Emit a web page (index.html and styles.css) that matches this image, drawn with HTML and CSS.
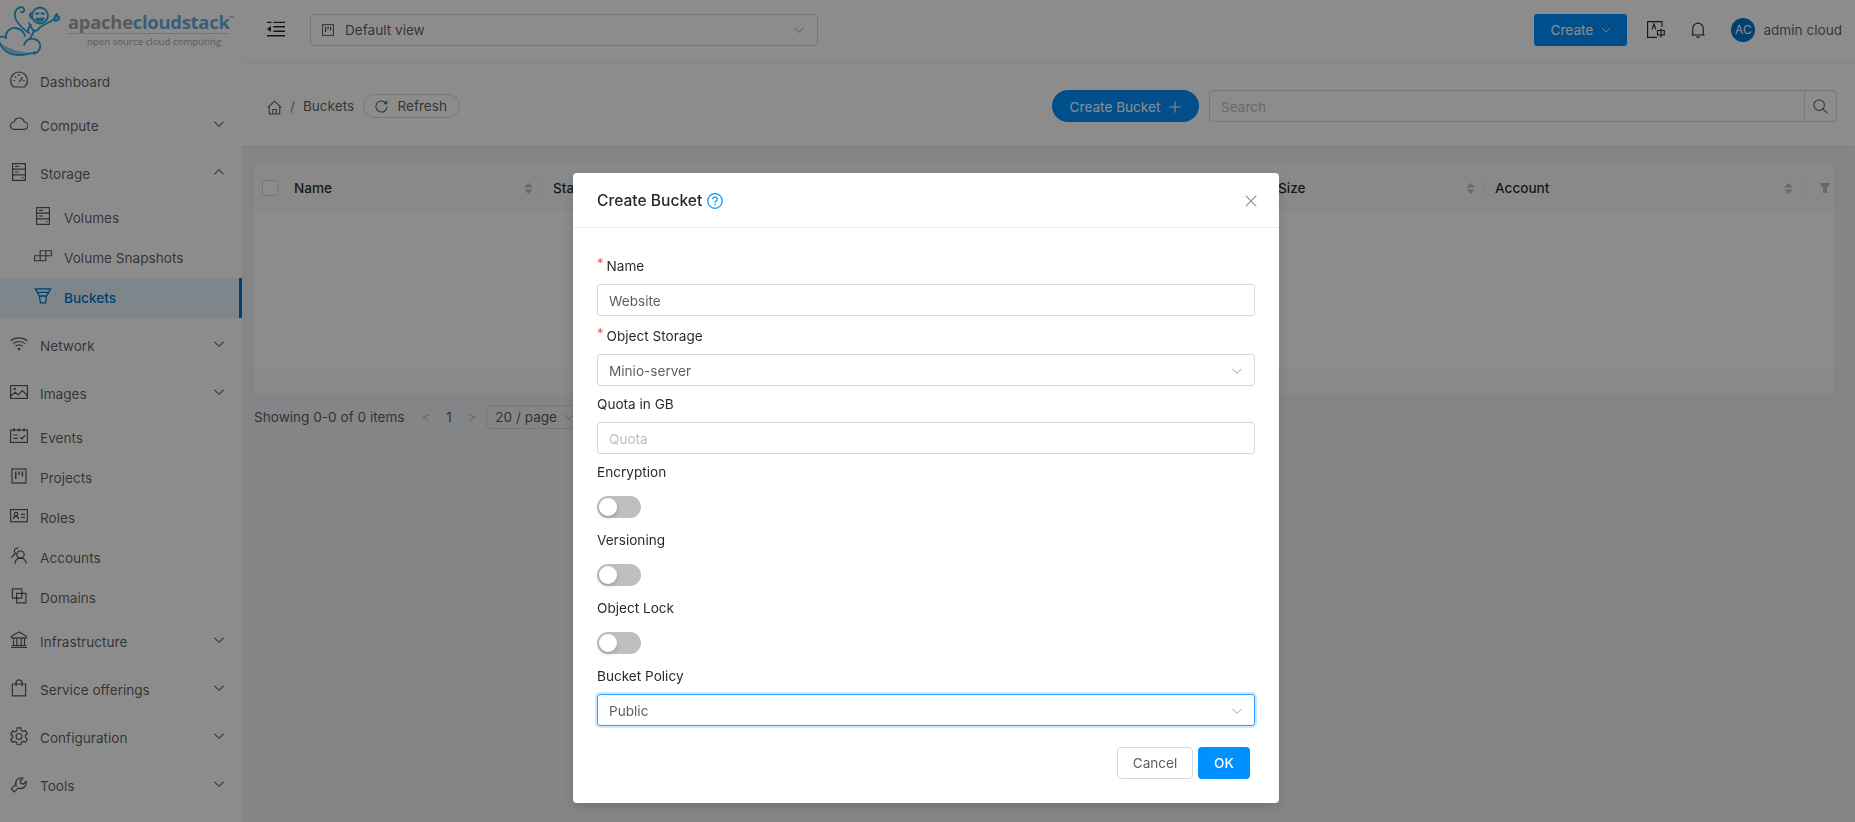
FILE: index.html
```html
<!DOCTYPE html>
<html lang="en">
<head>
<meta charset="utf-8">
<title>Buckets</title>
<link rel="stylesheet" href="styles.css">
</head>
<body>
<svg class="defs" width="0" height="0">
  <symbol id="down" viewBox="0 0 12 12"><path d="M1.500 3.800 6 8.300l4.500-4.500" fill="none" stroke="currentColor" stroke-width="1.100"/></symbol>
  <symbol id="up" viewBox="0 0 12 12"><path d="M1.500 8.200 6 3.700l4.500 4.500" fill="none" stroke="currentColor" stroke-width="1.100"/></symbol>
  <symbol id="sort" viewBox="0 0 10 14"><path d="M5 .5 9.500 6H.5zM5 13.500.5 8h9z" fill="currentColor"/></symbol>
  <symbol id="server" viewBox="0 0 18 18"><g fill="none" stroke="currentColor" stroke-width="1.200"><rect x="2.600" y=".6" width="12.800" height="16.800"/><path d="M2.600 6.200h12.800M2.600 11.800h12.800M5 3.400h4M5 9h4"/></g><path d="M12.200 14.600h1.400" stroke="currentColor" stroke-width="1.400"/></symbol>
</svg>

<div class="app">
  <aside class="sidebar">
    <div class="logo">
      <svg class="monkey" viewBox="0 0 62 58" width="62" height="58">
        <path d="M0 41c2 7 9 12 18 12 7 0 13-1 18-3-9 1-17 0-24-3-5-2-9-4-12-6z" fill="#8fd0ea"/>
        <g fill="none" stroke="#22a6d8" stroke-width="1.800" stroke-linecap="round" stroke-linejoin="round">
          <path d="M29 31C19 24 14 17 15 11c1-5 7-8 9-4 1 2-1 4-3 3"/>
          <path d="M0 35c3-1 5 0 6 1-1-6 4-11 10-10 5 1 8 4 9 8"/>
          <path d="M24 43c2-5 6-7 10-6 5 1 7 5 6 9-1 3-3 5-6 6"/>
          <path d="M0 41c2 7 9 12 18 12 7 0 13-1 17-3"/>
          <path d="M29 21c1 4 3 6 5 8l-4 8"/>
          <path d="M34 29c3 0 5-2 6-4l15-8"/>
          <path d="M31 23c-2 2-3 4-3 7"/>
          <path d="M54 17l1-3 2-2 .5 2.500 2 .5-1 3-3 1z" fill="#8fd0ea"/>
          <circle cx="40" cy="13.500" r="8"/>
          <path d="M32 11c-3 0-3 5 .5 5M36 17c2 3 6 3 8-.5z"/>
          <path d="M36 11.500h2.500M41.500 11.500h2.500"/>
        </g>
      </svg>
      <div class="logo-text">
        <div class="brand"><span class="apache">apache</span><span class="cloudstack">cloudstack</span><sup class="tm">™</sup></div>
        <div class="tagline">open source cloud computing</div>
      </div>
    </div>

    <nav class="menu">
      <a class="item">
        <svg class="ico" viewBox="0 0 18 18"><g fill="none" stroke="currentColor" stroke-width="1.200"><path d="M3.600 16h10.800c1.800-1.500 3-3.900 3-6.600A8.400 8.400 0 0 0 .6 9.400c0 2.700 1.200 5.100 3 6.600z"/><path d="M9 3v1.800M3.400 9.500h1.800M12.800 9.500h1.800M5 5.400l1.200 1.200M9.400 11l3-4.600"/></g></svg>
        <span class="label">Dashboard</span>
      </a>
      <a class="item group">
        <svg class="ico" viewBox="0 0 18 18"><path d="M4.400 14.400A3.700 3.700 0 0 1 4 7c.8-2.400 2.800-4 5.200-4 2.500 0 4.500 1.700 5.100 4a3.700 3.700 0 0 1-.2 7.400z" fill="none" stroke="currentColor" stroke-width="1.200"/></svg>
        <span class="label">Compute</span>
        <svg class="chev"><use href="#down"/></svg>
      </a>
      <a class="item group">
        <svg class="ico"><use href="#server"/></svg>
        <span class="label">Storage</span>
        <svg class="chev"><use href="#up"/></svg>
      </a>
      <div class="submenu">
        <a class="item sub">
          <svg class="ico"><use href="#server"/></svg>
          <span class="label">Volumes</span>
        </a>
        <a class="item sub">
          <svg class="ico" viewBox="0 0 18 18"><path d="M.6 8.800h5.600v5H.6zM6.200 8.800h5.600v5H6.200zM6.200 8.800V3.800h5.600v5M11.800 3.800h5.600v5h-5.600" fill="none" stroke="currentColor" stroke-width="1.100"/></svg>
          <span class="label">Volume Snapshots</span>
        </a>
        <a class="item sub active">
          <svg class="ico" viewBox="0 0 18 18"><path d="M1.500 1.800h15L12.600 9H5.400zM5.400 9l1 6.800h5.200l1-6.800M4 5.400h10" fill="none" stroke="currentColor" stroke-width="1.300"/></svg>
          <span class="label">Buckets</span>
        </a>
      </div>
      <a class="item group">
        <svg class="ico" viewBox="0 0 18 18"><g fill="none" stroke="currentColor" stroke-width="1.200"><path d="M.6 5.800c4.700-4 12.100-4 16.800 0M3 8.600c3.400-2.800 8.600-2.800 12 0M5.500 11.200c2-1.600 5-1.600 7 0"/></g><circle cx="9" cy="14" r="1.300" fill="currentColor"/></svg>
        <span class="label">Network</span>
        <svg class="chev"><use href="#down"/></svg>
      </a>
      <a class="item group">
        <svg class="ico" viewBox="0 0 18 18"><g fill="none" stroke="currentColor" stroke-width="1.200"><rect x=".6" y="2.600" width="16.800" height="12.800"/><path d="M.6 13l4.600-3.800 3 2.600 4-4.300 5.200 5"/></g><circle cx="4.600" cy="6" r="1.300" fill="currentColor"/></svg>
        <span class="label">Images</span>
        <svg class="chev"><use href="#down"/></svg>
      </a>
      <a class="item">
        <svg class="ico" viewBox="0 0 18 18"><g fill="none" stroke="currentColor" stroke-width="1.200"><rect x=".6" y="3" width="16.800" height="12.400"/><path d="M4 1.200v3.200M9 1.200v3.200M14 1.200v3.200M3.400 8h4.400M3.400 11.400h4.400M10 9.800l2 2 3.200-3.600"/></g></svg>
        <span class="label">Events</span>
      </a>
      <a class="item">
        <svg class="ico" viewBox="0 0 18 18"><g fill="none" stroke="currentColor" stroke-width="1.200"><rect x="2" y="2" width="14" height="14"/></g><path d="M5 4.500h1.500V12H5zM8.300 4.500h1.500V8H8.300zM11.600 4.500h1.500v5h-1.500z" fill="currentColor"/></svg>
        <span class="label">Projects</span>
      </a>
      <a class="item">
        <svg class="ico" viewBox="0 0 18 18"><g fill="none" stroke="currentColor" stroke-width="1.200"><rect x=".6" y="2.600" width="16.800" height="12.200"/><circle cx="6" cy="7.200" r="1.800"/><path d="M3.200 12c.4-1.700 1.500-2.600 2.800-2.600S8.400 10.300 8.800 12M11 7.400h4M11 10.400h4"/></g></svg>
        <span class="label">Roles</span>
      </a>
      <a class="item">
        <svg class="ico" viewBox="0 0 18 18"><g fill="none" stroke="currentColor" stroke-width="1.200"><circle cx="10.500" cy="7.500" r="3.700"/><path d="M4.800 16.600c.4-3.400 2.700-5.400 5.700-5.400s5.300 2 5.700 5.400M8.200 1.200C6 .8 4.200 2.400 4.400 4.400c0 1 .6 1.800 1.200 2.200C3.200 7.800 2 9.300 1.400 11"/></g></svg>
        <span class="label">Accounts</span>
      </a>
      <a class="item">
        <svg class="ico" viewBox="0 0 18 18"><g fill="none" stroke="currentColor" stroke-width="1.200"><path d="M2.400 1.800h9.400v9.400H2.400z"/><path d="M6.600 6.400H16v9.400H6.600z"/></g></svg>
        <span class="label">Domains</span>
      </a>
      <a class="item group">
        <svg class="ico" viewBox="0 0 18 18"><path d="M9 .9 1.400 5.300v1.500h15.200V5.300zM1 16.500h16M1.800 14.700h14.400M3.500 7v7.700M6.800 7v7.700M11.200 7v7.700M14.500 7v7.700" fill="none" stroke="currentColor" stroke-width="1.200"/></svg>
        <span class="label">Infrastructure</span>
        <svg class="chev"><use href="#down"/></svg>
      </a>
      <a class="item group">
        <svg class="ico" viewBox="0 0 18 18"><g fill="none" stroke="currentColor" stroke-width="1.200"><path d="M2.400 5h13.200v11.800H2.400z"/><path d="M6 7.200V3.800C6 2 7.300.9 9 .9s3 1.100 3 2.900v3.400"/></g></svg>
        <span class="label">Service offerings</span>
        <svg class="chev"><use href="#down"/></svg>
      </a>
      <a class="item group">
        <svg class="ico" viewBox="0 0 18 18"><g fill="none" stroke="currentColor" stroke-width="1.200"><path d="m7.200.9 3.600 0 .5 2.400 1.900 1.100 2.300-.8 1.800 3.100-1.800 1.600v2.200l1.800 1.600-1.800 3.100-2.300-.8-1.900 1.100-.5 2.400H7.200l-.5-2.400-1.900-1.100-2.300.8L.7 12.600l1.800-1.600V8.800L.7 7.200l1.800-3.100 2.300.8 1.900-1.100z"/><circle cx="9" cy="9.400" r="2.900"/></g></svg>
        <span class="label">Configuration</span>
        <svg class="chev"><use href="#down"/></svg>
      </a>
      <a class="item group">
        <svg class="ico" viewBox="0 0 18 18"><path d="M5 10.200 1.200 14l3 3 3.800-3.900c3 1 6-.2 7.500-2.500.9-1.400 1-2.900.7-4.200l-2.800 2.600-2.500-.6-.7-2.400 2.700-2.800c-2-.6-4.300-.1-5.800 1.500-1.600 1.700-1.900 4-1.100 5.900z" fill="none" stroke="currentColor" stroke-width="1.200"/></svg>
        <span class="label">Tools</span>
        <svg class="chev"><use href="#down"/></svg>
      </a>
    </nav>
  </aside>

  <div class="main">
    <header class="topbar">
      <svg class="hamburger" viewBox="0 0 16 16" width="18" height="18"><path d="M5.600 2.100H16M5.600 6H16M5.600 10H16M0 14H16M0 2.100H4" fill="none" stroke="#262626" stroke-width="1.200"/><path d="M3.500 5.400 0 8l3.500 2.600z" fill="#262626"/></svg>
      <div class="view-select">
        <svg class="view-ico" viewBox="0 0 12 12" width="12" height="12"><rect x=".6" y=".6" width="10.800" height="10.800" fill="none" stroke="currentColor" stroke-width="1"/><path d="M3 2.500h1.200V8H3zM5.500 2.500h1.200v3H5.500zM8 2.500h1.200v4H8z" fill="currentColor"/></svg>
        <span class="view-text">Default view</span>
        <svg class="sel-chev"><use href="#down"/></svg>
      </div>
      <div class="spacer"></div>
      <button class="btn-create">Create <svg class="create-chev"><use href="#down"/></svg></button>
      <svg class="translate" viewBox="0 0 18 17" width="18" height="17"><g fill="none" stroke="#262626" stroke-width="1.100"><path d="M15 6V.6H.6v15.800H10"/><path d="M5 8.500 7 3l1.800 5.500M10.500 9.500h6.800V14h-6.800zM14 7.500v9"/></g></svg>
      <svg class="bell" viewBox="0 0 14 16" width="14" height="16"><path d="M1.800 13V6.400a5.200 5.200 0 0 1 10.400 0V13M.4 13h13.200M5.500 14.500a1.600 1.400 0 0 0 3 0M7 .2v1" fill="none" stroke="#262626" stroke-width="1.100"/></svg>
      <div class="avatar">AC</div>
      <span class="username">admin cloud</span>
    </header>

    <section class="page-head">
      <svg class="home" viewBox="0 0 16 15" width="15" height="15"><path d="M.6 7.600 8 .8l7.400 6.800M2.400 6.200v8.200h11.200V6.200M6.200 14.400V9.600h3.600v4.800" fill="none" stroke="#595959" stroke-width="1.100"/></svg>
      <span class="crumb-sep">/</span>
      <span class="crumb">Buckets</span>
      <button class="btn-refresh">
        <svg viewBox="0 0 14 14" width="13" height="13"><path d="M11.800 3.400A6 6 0 1 0 13 7M12.600.8V4H9.400" fill="none" stroke="#595959" stroke-width="1.100"/></svg>
        Refresh
      </button>
      <div class="spacer"></div>
      <button class="btn-bucket">Create Bucket
        <svg viewBox="0 0 12 12" width="12" height="12"><path d="M6 .5v11M.5 6h11" stroke="#fff" stroke-width="1.100"/></svg>
      </button>
      <div class="search">
        <span class="search-ph">Search</span>
        <span class="search-btn"><svg viewBox="0 0 16 16" width="15" height="15"><circle cx="6.600" cy="6.600" r="5.600" fill="none" stroke="#595959" stroke-width="1.100"/><path d="m10.800 10.800 4.600 4.600" stroke="#595959" stroke-width="1.100"/></svg></span>
      </div>
    </section>

    <section class="content">
      <div class="table">
        <div class="thead">
          <div class="th th-check"><span class="checkbox"></span></div>
          <div class="th th-name">Name<svg class="sorter"><use href="#sort"/></svg></div>
          <div class="th th-mid">Status</div>
          <div class="th th-size">Size<svg class="sorter"><use href="#sort"/></svg></div>
          <div class="th th-account">Account<svg class="sorter"><use href="#sort"/></svg></div>
          <div class="th th-filter"><svg viewBox="0 0 12 12" width="12" height="12"><path d="M.3 1h11.400L8 5.500V11H4V5.500z" fill="#bfbfbf"/></svg></div>
        </div>
        <div class="tbody"></div>
        <div class="tfoot"></div>
      </div>
      <div class="pager">
        <span>Showing 0-0 of 0 items</span>
        <span class="pg-arrow">&lt;</span>
        <span class="pg-num">1</span>
        <span class="pg-arrow">&gt;</span>
        <span class="pg-size">20 / page <svg class="pg-chev"><use href="#down"/></svg></span>
      </div>
    </section>
  </div>
</div>

<div class="mask">
  <div class="modal">
    <div class="modal-head">
      <span class="modal-title">Create Bucket</span>
      <svg class="help" viewBox="0 0 16 16" width="16" height="16"><circle cx="8" cy="8" r="7.300" fill="none" stroke="#0091ff" stroke-width="1.200"/><path d="M5.700 6.200C5.800 4.900 6.800 4.200 8 4.200c1.300 0 2.300.8 2.300 2 0 1.800-2.300 1.800-2.300 3.500" fill="none" stroke="#0091ff" stroke-width="1.200"/><circle cx="8" cy="11.600" r=".8" fill="#0091ff"/></svg>
      <svg class="close" viewBox="0 0 12 12" width="12" height="12"><path d="m.7.700 10.600 10.600M11.300.7.700 11.300" stroke="#8c8c8c" stroke-width="1.100"/></svg>
    </div>
    <form class="modal-body">
      <div class="field field-first">
        <label class="flabel"><i class="req">*</i>Name</label>
        <div class="control">Website</div>
      </div>
      <div class="field">
        <label class="flabel"><i class="req">*</i>Object Storage</label>
        <div class="control">Minio-server<svg class="sel-chev"><use href="#down"/></svg></div>
      </div>
      <div class="field">
        <label class="flabel">Quota in GB</label>
        <div class="control placeholder">Quota</div>
      </div>
      <div class="field">
        <label class="flabel">Encryption</label>
        <div class="switch-row"><span class="switch"></span></div>
      </div>
      <div class="field">
        <label class="flabel">Versioning</label>
        <div class="switch-row"><span class="switch"></span></div>
      </div>
      <div class="field">
        <label class="flabel">Object Lock</label>
        <div class="switch-row"><span class="switch"></span></div>
      </div>
      <div class="field">
        <label class="flabel">Bucket Policy</label>
        <div class="control focused">Public<svg class="sel-chev"><use href="#down"/></svg></div>
      </div>
      <div class="modal-foot">
        <button type="button" class="btn-cancel">Cancel</button>
        <button type="button" class="btn-ok">OK</button>
      </div>
    </form>
  </div>
</div>
</body>
</html>
```

FILE: styles.css
```css
* { box-sizing: border-box; }
html, body { margin: 0; height: 100%; overflow: hidden; }
body {
  font-family: "Inter", "Liberation Sans", sans-serif;
  font-size: 13.6px;
  line-height: 22px;
  color: rgba(0, 0, 0, .65);
  background: #f0f2f5;
}
button { font: inherit; cursor: pointer; }
.defs { position: absolute; }
.app { display: flex; height: 822px; }
.spacer { flex: 1; }

/* Sidebar */
.sidebar { width: 242px; flex: none; background: #fff; }
.logo { height: 62px; display: flex; }
.monkey { flex: none; margin-top: 2px; }
.logo-text { margin-left: 6px; padding-top: 9px; }
.brand {
  font-family: "Open Sans", sans-serif;
  font-weight: 700;
  font-size: 18.4px;
  line-height: 26px;
  letter-spacing: -.25px;
  white-space: nowrap;
  width: 160px;
  border-bottom: 1px solid #d6d6d6;
  height: 25px;
}
.apache { color: #a3a3a3; }
.cloudstack { color: #66aed8; }
.tm { font-size: 6px; line-height: 0; vertical-align: 9px; color: #888; }
.tagline {
  font-family: "Open Sans", sans-serif;
  font-size: 9.7px;
  line-height: 15px;
  color: #a8a8a8;
  padding-left: 19px;
  white-space: nowrap;
}
.menu { display: flex; flex-direction: column; }
.item {
  height: 40px;
  display: flex;
  align-items: center;
  padding-left: 10px;
  padding-right: 17px;
  color: rgba(0, 0, 0, .65);
}
.item.group { margin: 4px 0; }
.submenu { margin-bottom: 4px; }
.ico { width: 18px; height: 18px; flex: none; margin-top: -4px; }
.label { margin-left: 12px; flex: 1; white-space: nowrap; }
.chev { width: 12px; height: 12px; flex: none; margin-top: -4px; }
.sub { padding-left: 34px; }
.active { background: #e6f4ff; color: #0077cc; border-right: 3px solid #0077cc; font-weight: 500; }

/* Main */
.main { flex: 1; min-width: 0; display: flex; flex-direction: column; }
.topbar {
  height: 61px;
  background: #fff;
  display: flex;
  align-items: center;
  padding: 0 13px 2px 25px;
  box-shadow: 0 1px 3px rgba(0, 0, 0, .06);
  position: relative;
}
.hamburger { flex: none; margin-top: -2px; }
.view-select {
  width: 508px;
  margin-left: 25px;
  height: 32px;
  border: 1px solid #d9d9d9;
  border-radius: 4px;
  display: flex;
  align-items: center;
  padding: 0 12px 0 11px;
}
.view-ico { flex: none; margin-right: 11px; color: #595959; }
.view-text { flex: 1; }
.sel-chev { width: 12px; height: 12px; color: #bfbfbf; flex: none; }
.btn-create {
  width: 93px;
  height: 32px;
  background: #0091ff;
  border: 0;
  border-radius: 3px;
  color: #fff;
  display: flex;
  align-items: center;
  justify-content: center;
  gap: 8px;
  padding: 1px 0 0;
}
.create-chev { width: 10px; height: 10px; }
.translate { margin-left: 20px; flex: none; }
.bell { margin-left: 26px; flex: none; }
.avatar {
  width: 24px;
  height: 24px;
  border-radius: 50%;
  background: #0077cc;
  color: #fff;
  font-size: 12px;
  line-height: 24px;
  text-align: center;
  margin-left: 26px;
  flex: none;
}
.username { margin-left: 8px; }

.page-head {
  height: 86px;
  background: #fff;
  border-bottom: 1px solid #e8e8e8;
  display: flex;
  align-items: center;
  padding: 5px 18px 0 25px;
}
.home { flex: none; margin-top: 3px; }
.crumb-sep { margin-left: 8px; color: #8c8c8c; }
.crumb { margin-left: 8px; }
.btn-refresh {
  height: 24px;
  width: 97px;
  margin-left: 9px;
  border: 1px solid #d9d9d9;
  border-radius: 12px;
  background: #fff;
  color: rgba(0, 0, 0, .65);
  display: flex;
  align-items: center;
  justify-content: center;
  gap: 9px;
  padding: 0 1px 0 0;
}
.btn-bucket {
  width: 147px;
  height: 32px;
  background: #0091ff;
  border: 0;
  border-radius: 16px;
  color: #fff;
  display: flex;
  align-items: center;
  justify-content: center;
  gap: 9px;
  padding: 1px 0 0;
}
.search {
  width: 628px;
  height: 32px;
  margin-left: 10px;
  border: 1px solid #d9d9d9;
  border-radius: 4px;
  display: flex;
  align-items: center;
  padding-left: 11px;
}
.search-ph { flex: 1; color: #bfbfbf; padding-top: 1px; }
.search-btn {
  width: 32px;
  height: 30px;
  border-left: 1px solid #d9d9d9;
  display: flex;
  align-items: center;
  justify-content: center;
}

.content { flex: 1; padding: 17px 17px 0 12px; border-right: 4px solid #f5f5f5; }
.table { background: #fff; }
.thead {
  height: 47px;
  padding-top: 2px;
  background: #fafafa;
  border-bottom: 1px solid #f0f0f0;
  display: grid;
  grid-template-columns: 30px 259px 725px 217px 318px 1fr;
  align-items: center;
  color: rgba(0, 0, 0, .85);
  font-weight: 500;
}
.th { display: flex; align-items: center; height: 22px; padding-left: 10px; }
.th-check { padding-left: 8px; }
.th-name, .th-size, .th-account { justify-content: space-between; padding-right: 9px; border-right: 1px solid #f0f0f0; }
.th-filter { padding-left: 16px; }
.checkbox { width: 16px; height: 16px; border: 1px solid #d9d9d9; border-radius: 3px; background: #fff; flex: none; }
.sorter { width: 9px; height: 13px; color: #bfbfbf; flex: none; }
.tbody { height: 159px; border-bottom: 1px solid #f0f0f0; }
.tfoot { height: 24px; background: #fafafa; }
.pager {
  display: flex;
  align-items: center;
  height: 26px;
  margin-top: 10px;
}
.pg-arrow { color: #bfbfbf; margin-left: 17px; font-size: 13px; }
.pg-num { margin-left: 16px; margin-right: -1px; }
.pg-size {
  margin-left: 10px;
  width: 110px;
  height: 24px;
  line-height: 22px;
  border: 1px solid #d9d9d9;
  border-radius: 4px;
  padding-left: 8px;
  display: flex;
  align-items: center;
  gap: 6px;
  white-space: nowrap;
}
.pg-chev { width: 12px; height: 12px; color: #bfbfbf; flex: none; }

/* Modal */
.mask {
  position: fixed;
  inset: 0;
  background: rgba(0, 0, 0, .45);
  display: flex;
  justify-content: center;
  align-items: flex-start;
  padding: 173px 3px 0 0;
}
.modal {
  width: 706px;
  height: 630px;
  background: #fff;
  border-radius: 4px;
  box-shadow: 0 4px 12px rgba(0, 0, 0, .15);
}
.modal-head {
  height: 55px;
  border-bottom: 1px solid #f0f0f0;
  display: flex;
  align-items: center;
  padding: 1px 22px 0 24px;
}
.modal-title { font-size: 15.6px; font-weight: 500; color: rgba(0, 0, 0, .85); }
.help { margin-left: 5px; }
.close { margin-left: auto; }
.modal-body { padding: 27px 24px 24px; }
.field { margin-bottom: 7px; }
.field-first { margin-bottom: 9px; }
.flabel {
  display: block;
  height: 22px;
  margin-bottom: 7px;
  color: rgba(0, 0, 0, .85);
}
.req {
  color: #ff4d4f;
  font-style: normal;
  font-size: 13px;
  margin-right: 3px;
  position: relative;
  top: -3px;
}
.control {
  height: 32px;
  border: 1px solid #d9d9d9;
  border-radius: 3px;
  padding: 1px 11px 0;
  display: flex;
  align-items: center;
  justify-content: space-between;
  color: rgba(0, 0, 0, .65);
}
.placeholder { color: #bfbfbf; }
.focused { border-color: #2e9bff; box-shadow: 0 0 0 2px rgba(24, 144, 255, .2); }
.switch-row { height: 32px; padding-top: 6px; }
.switch {
  display: block;
  width: 44px;
  height: 22px;
  border-radius: 11px;
  background: #bfbfbf;
  position: relative;
}
.switch::after {
  content: "";
  position: absolute;
  left: 2px;
  top: 2px;
  width: 18px;
  height: 18px;
  border-radius: 50%;
  background: #fff;
  box-shadow: 0 2px 4px rgba(0, 35, 11, .2);
}
.modal-foot {
  display: flex;
  justify-content: flex-end;
  gap: 5px;
  padding-right: 5px;
  margin-top: 21px;
}
.btn-cancel {
  width: 76px;
  height: 32px;
  background: #fff;
  border: 1px solid #d9d9d9;
  border-radius: 4px;
  color: rgba(0, 0, 0, .65);
}
.btn-ok {
  width: 52px;
  height: 32px;
  background: #0091ff;
  border: 0;
  border-radius: 4px;
  color: #fff;
  font-weight: 500;
}
```
